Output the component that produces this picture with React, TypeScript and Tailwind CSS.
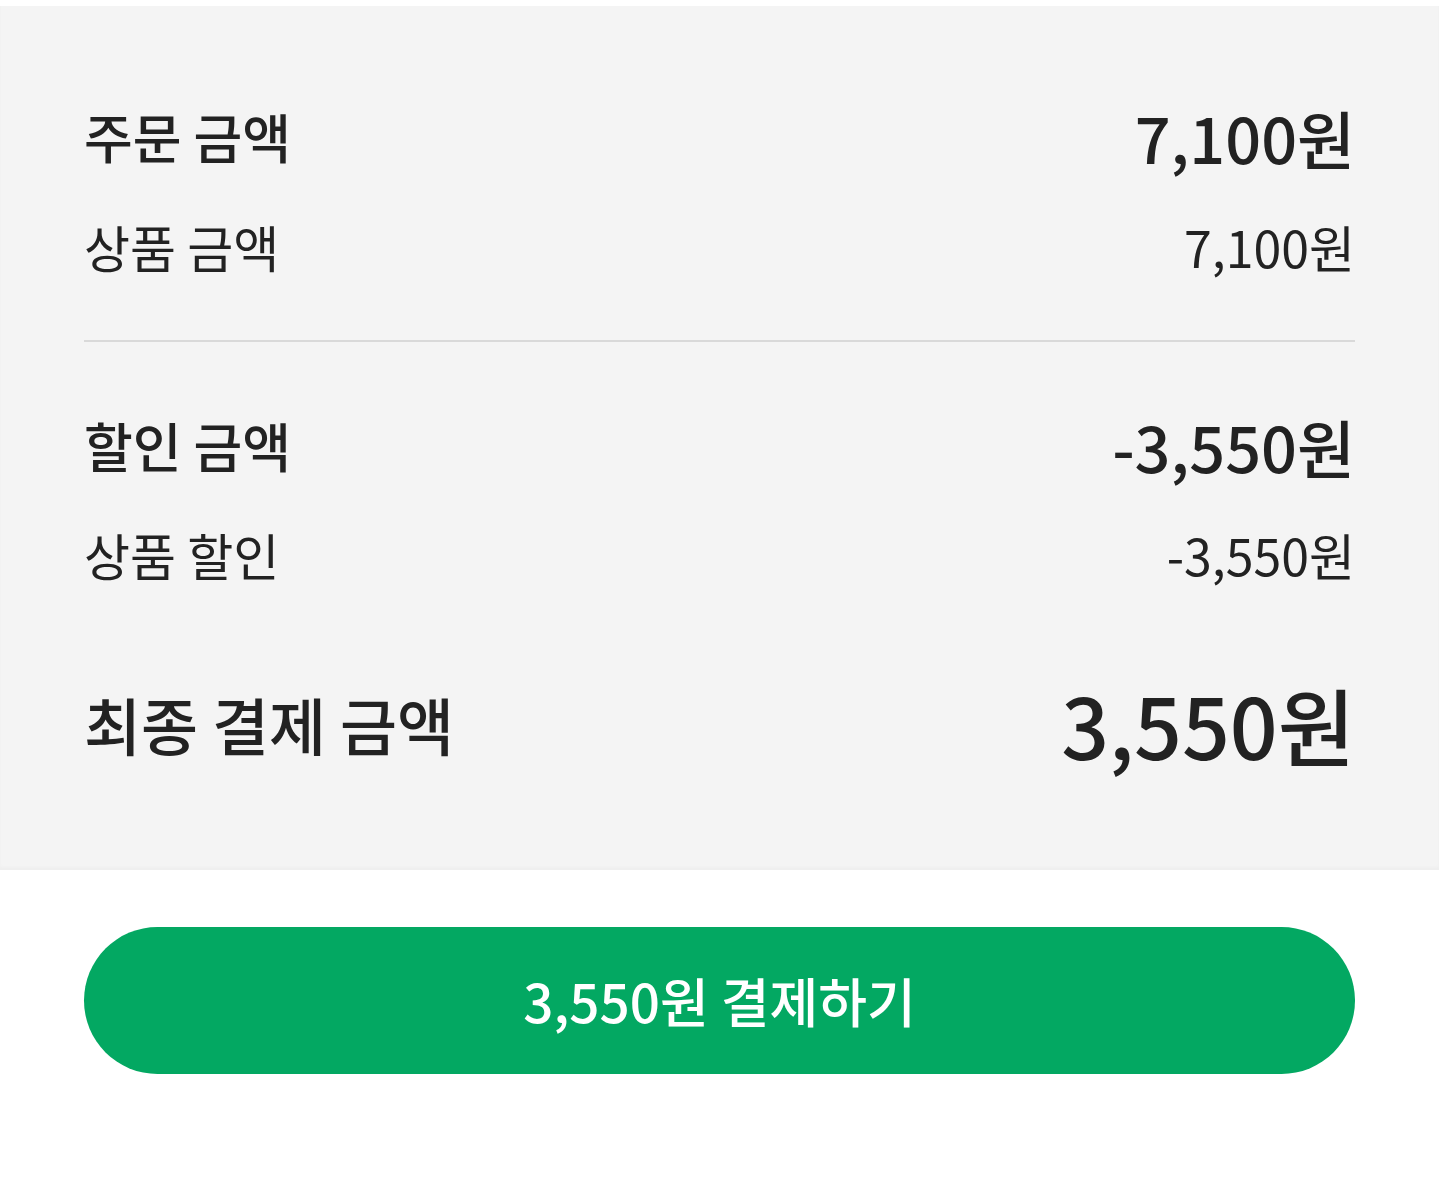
import React from "react";

const font = { fontFamily: '"Noto Sans CJK KR", "Noto Sans", sans-serif' };

export default function App() {
  return (
    <div className="min-h-[1177px] bg-white pt-[6px] text-[#222222]" style={font}>
      <div className="bg-[#f4f4f4] px-[84px] pt-[90px] pb-[96px] shadow-[inset_0_-3px_3px_rgba(0,0,0,0.025)]">
        <div className="flex h-[80px] items-center justify-between">
          <span className="text-[53px] font-medium leading-none">주문 금액</span>
          <span className="text-[63px] font-medium leading-none">7,100원</span>
        </div>
        <div className="mt-[30px] flex h-[80px] items-center justify-between">
          <span className="text-[50px] leading-none">상품 금액</span>
          <span className="text-[50px] leading-none">7,100원</span>
        </div>
        <div className="mt-[54px] h-[2px] bg-[#d9d9d9]" />
        <div className="mt-[63px] flex h-[80px] items-center justify-between">
          <span className="text-[53px] font-medium leading-none">할인 금액</span>
          <span className="text-[63px] font-medium leading-none">-3,550원</span>
        </div>
        <div className="mt-[29px] flex h-[80px] items-center justify-between">
          <span className="text-[50px] leading-none">상품 할인</span>
          <span className="text-[50px] leading-none">-3,550원</span>
        </div>
        <div className="mt-[80px] flex h-[100px] items-center justify-between">
          <span className="text-[62px] font-medium leading-none">최종 결제 금액</span>
          <span className="text-[84px] font-medium leading-none">3,550원</span>
        </div>
      </div>
      <div className="px-[84px] pt-[57px]">
        <button className="flex h-[147px] w-full items-center justify-center rounded-full bg-[#03a862] text-[53px] font-medium leading-none text-white">
          3,550원 결제하기
        </button>
      </div>
    </div>
  );
}
